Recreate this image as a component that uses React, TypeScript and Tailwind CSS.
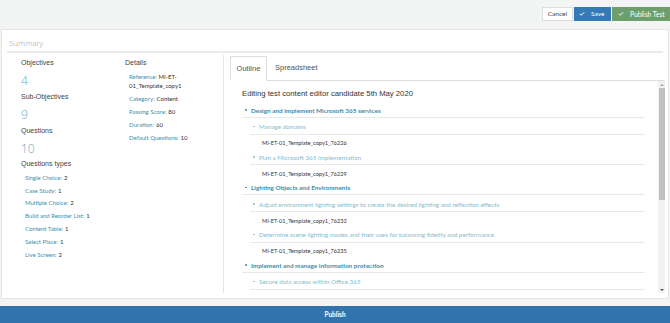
import { Check } from 'lucide-react';

const objectives = [
  { label: 'Objectives', value: '4' },
  { label: 'Sub-Objectives', value: '9' },
  { label: 'Questions', value: '10' },
];

const questionTypes = [
  { label: 'Single Choice', value: 2 },
  { label: 'Case Study', value: 1 },
  { label: 'Multiple Choice', value: 2 },
  { label: 'Build and Reorder List', value: 1 },
  { label: 'Content Table', value: 1 },
  { label: 'Select Place', value: 1 },
  { label: 'Live Screen', value: 2 },
];

const details = [
  { label: 'Category', value: 'Content' },
  { label: 'Passing Score', value: '80' },
  { label: 'Duration', value: '60' },
  { label: 'Default Questions', value: '10' },
];

type Row = { kind: 'section' | 'sub' | 'code'; text: string };

const outline: Row[] = [
  { kind: 'section', text: 'Design and implement Microsoft 365 services' },
  { kind: 'sub', text: 'Manage domains' },
  { kind: 'code', text: 'MI-ET-01_Template_copy1_76226' },
  { kind: 'sub', text: 'Plan a Microsoft 365 implementation' },
  { kind: 'code', text: 'MI-ET-01_Template_copy1_76229' },
  { kind: 'section', text: 'Lighting Objects and Environments' },
  { kind: 'sub', text: 'Adjust environment lighting settings to create the desired lighting and reflection effects' },
  { kind: 'code', text: 'MI-ET-01_Template_copy1_76232' },
  { kind: 'sub', text: 'Determine scene lighting modes and their uses for balancing fidelity and performance' },
  { kind: 'code', text: 'MI-ET-01_Template_copy1_76235' },
  { kind: 'section', text: 'Implement and manage information protection' },
  { kind: 'sub', text: 'Secure data access within Office 365' },
];

function OutlineRow({ row }: { row: Row }) {
  if (row.kind === 'section') {
    return (
      <div className="shrink-0 pl-[3px] pt-[4.5px] pb-[2px] border-b border-[#e8eaea] flex items-center h-[16.5px] text-[6.4px] leading-[9px] font-bold text-[#3a8dab]">
        <span className="w-[1.5px] h-[1.5px] rounded-full bg-[#3a8dab] mr-[4.5px]" />
        {row.text}
      </div>
    );
  }
  if (row.kind === 'sub') {
    return (
      <div className="shrink-0 ml-[8px] pl-[3px] pt-[4.5px] pb-[2.5px] border-b border-[#e8eaea] flex items-center h-[17px] text-[6.3px] leading-[9px] text-[#86bccd]">
        <span className="w-[1.5px] h-[1.5px] rounded-full bg-[#86bccd] mr-[4.5px]" />
        {row.text}
      </div>
    );
  }
  return (
    <div className="shrink-0 pl-[20px] pt-[3.5px] pb-[1px] h-[13.5px] text-[5.6px] leading-[9px] text-[#333]">
      {row.text}
    </div>
  );
}

export default function App() {
  return (
    <div className="w-[670px] h-[323px] bg-[#f3f5f4] flex flex-col overflow-hidden font-['Lato',sans-serif]">
      <div className="h-[29px] shrink-0 flex justify-end items-start pt-[7px]">
        <button className="h-[14px] px-[5px] bg-white border border-[#dcdedd] text-[6.5px] text-[#444] mr-[1px]">
          Cancel
        </button>
        <button className="h-[14px] w-[37px] pl-[5px] flex items-center gap-[6px] bg-[#337ab7] text-white text-[6.5px]">
          <Check className="w-[6px] h-[6px]" strokeWidth={4} />
          Save
        </button>
        <button className="h-[14px] w-[58px] ml-[1px] pl-[6px] flex items-center gap-[6px] bg-[#6c9f6c] text-white text-[6.7px]">
          <Check className="w-[6px] h-[6px]" strokeWidth={4} />
          Publish Test
        </button>
      </div>

      <div className="ml-[1px] w-[668px] h-[270px] shrink-0 bg-white border border-[#e4e7e6] flex flex-col overflow-hidden">
        <div className="mx-[5px] pl-[2px] pt-[8px] pb-[3px] border-b-2 border-[#eaeceb] text-[8px] leading-[10px] font-['Open_Sans',sans-serif] font-light text-[#9a9a9a]">
          Summary
        </div>

        <div className="flex flex-1 min-h-0 pt-[2px] pb-[5px]">
          <div className="w-[222px] border-r border-[#e4e4e4] flex">
            <div className="w-[123px] pl-[19px]">
              {objectives.map((o) => (
                <div key={o.label}>
                  <div className="h-[16px] flex items-center text-[7px] text-[#444] font-['Liberation_Sans',sans-serif]">
                    {o.label}
                  </div>
                  <div className="h-[18px] pt-[2px] flex items-center text-[12px] font-['Open_Sans',sans-serif] font-light text-[#63a8c8]">
                    {o.value}
                  </div>
                </div>
              ))}
              <div className="h-[14px] flex items-center text-[7px] text-[#444] font-['Liberation_Sans',sans-serif]">
                Questions types
              </div>
              <div className="pl-[4px]">
                {questionTypes.map((q) => (
                  <div key={q.label} className="h-[12.8px] flex items-center text-[6px] text-[#3d8fae]">
                    {q.label}:<span className="ml-[2px] text-[#333]">{q.value}</span>
                  </div>
                ))}
              </div>
            </div>
            <div className="flex-1">
              <div className="h-[16px] flex items-center text-[7px] text-[#444] font-['Liberation_Sans',sans-serif]">
                Details
              </div>
              <div className="pl-[4px] pt-[0.5px]">
                <div className="text-[6px] leading-[9px] text-[#3d8fae]">
                  Reference: <span className="text-[#333]">MI-ET-</span>
                  <br />
                  <span className="text-[#333]">01_Template_copy1</span>
                </div>
                <div className="pt-[2px]">
                  {details.map((d) => (
                    <div key={d.label} className="h-[13px] flex items-center text-[6px] text-[#3d8fae]">
                      {d.label}:<span className="ml-[2px] text-[#333]">{d.value}</span>
                    </div>
                  ))}
                </div>
              </div>
            </div>
          </div>

          <div className="flex-1 min-h-0 flex flex-col pl-[6px] pr-[3px]">
            <div className="flex shrink-0 border-b border-[#dedede] mt-[1px] font-['Liberation_Sans',sans-serif] text-[7.5px]">
              <div className="h-[25px] w-[37px] -mb-[1px] flex items-center justify-center border border-[#dedede] border-b-white bg-white text-[#555]">
                Outline
              </div>
              <div className="h-[24px] pl-[8px] flex items-center text-[#555]">Spreadsheet</div>
            </div>
            <div className="flex flex-1 min-h-0 pl-[1px] overflow-hidden">
              <div className="flex-1 flex flex-col pl-[11px] pr-[13px] overflow-hidden">
                <div className="shrink-0 pt-[7px] pb-[1px] text-[7.7px] leading-[12px] text-[#333] font-['Liberation_Sans',sans-serif]">
                  Editing test content editor candidate 5th May 2020
                </div>
                {outline.map((row, i) => (
                  <OutlineRow key={i} row={row} />
                ))}
              </div>
              <div className="w-[7px] bg-[#f1f1f1] flex flex-col items-center">
                <div className="h-[7px] flex items-center justify-center">
                  <div className="w-0 h-0 border-l-[2px] border-r-[2px] border-b-[2px] border-l-transparent border-r-transparent border-b-[#a3a3a3]" />
                </div>
                <div className="w-[6px] h-[112px] bg-[#c1c1c1]" />
                <div className="flex-1" />
                <div className="h-[7px] flex items-center justify-center">
                  <div className="w-0 h-0 border-l-[2px] border-r-[2px] border-t-[2px] border-l-transparent border-r-transparent border-t-[#505050]" />
                </div>
              </div>
            </div>
          </div>
        </div>
      </div>

      <div className="mt-[7px] h-[17px] shrink-0 bg-[#3174ad] flex items-center justify-center text-white text-[6.5px] font-bold">
        Publish
      </div>
    </div>
  );
}
